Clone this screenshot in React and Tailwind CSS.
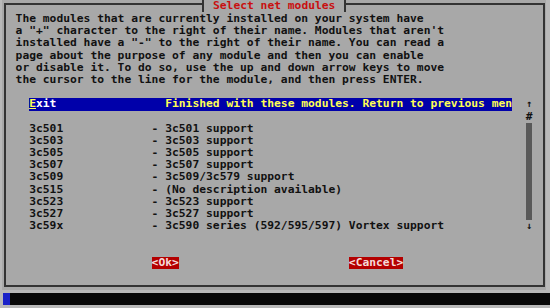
const INTRO = [
    'The modules that are currently installed on your system have',
    'a "+" character to the right of their name. Modules that aren\'t',
    'installed have a "-" to the right of their name. You can read a',
    'page about the purpose of any module and then you can enable',
    'or disable it. To do so, use the up and down arrow keys to move',
    'the cursor to the line for the module, and then press ENTER.',
];

const MODULES = [
    { name: '3c501', desc: '3c501 support' },
    { name: '3c503', desc: '3c503 support' },
    { name: '3c505', desc: '3c505 support' },
    { name: '3c507', desc: '3c507 support' },
    { name: '3c509', desc: '3c509/3c579 support' },
    { name: '3c515', desc: '(No description available)' },
    { name: '3c523', desc: '3c523 support' },
    { name: '3c527', desc: '3c527 support' },
    { name: '3c59x', desc: '3c590 series (592/595/597) Vortex support' },
];

const ROW = 'h-[12.2px] leading-[12.2px] whitespace-pre';

export default function App() {
    return (
        <div className="w-[550px] h-[308px] bg-[#b9b9b9] flex flex-col overflow-hidden font-['DejaVu_Sans_Mono','Liberation_Mono',monospace] text-[11.3px] font-bold text-[#111]">

            {/* ── Dialog area ─────────────────────────────────────────── */}
            <div className="h-[290px] bg-[#a8a8a8] ml-[2px] mr-[4px] pt-[3px] pl-[2px] pr-[1px]">
                <div className="relative h-[284px] border-2 border-[#333] pt-[8px] pl-[9.6px]">

                    {/* title */}
                    <div className="absolute top-[-5px] left-[196px] h-[12px] flex bg-[#a8a8a8]">
                        <span className="w-[2px] bg-[#333]" />
                        <span className="px-[9px] leading-[12px] text-[#c81010] whitespace-pre">Select net modules</span>
                        <span className="w-[2px] bg-[#333]" />
                    </div>

                    {INTRO.map((line) => (
                        <div key={line} className={ROW}>{line}</div>
                    ))}
                    <div className="h-[12.2px]" />

                    {/* list + scrollbar */}
                    <div className="flex ml-[2ch]">
                        <div className="w-[71ch]">
                            <div className={`${ROW} flex bg-[#0000aa]`}>
                                <span className="w-[20ch] text-white">
                                    <span className="text-[#ffff55] underline">E</span>xit
                                </span>
                                <span className="text-[#ffff55]">Finished with these modules. Return to previous men</span>
                            </div>
                            <div className="h-[12.2px]" />
                            {MODULES.map(({ name, desc }) => (
                                <div key={name} className={`${ROW} flex`}>
                                    <span className="w-[18ch]">{name}</span>
                                    <span>- {desc}</span>
                                </div>
                            ))}
                        </div>
                        <div className="ml-[2ch] w-[1ch] flex flex-col items-center">
                            <div className={`${ROW} text-[10px]`}>↑</div>
                            <div className={ROW}>#</div>
                            <div className="h-[97.6px] w-[6px] bg-[#595959]" />
                            <div className={`${ROW} text-[10px]`}>↓</div>
                        </div>
                    </div>

                    {/* buttons */}
                    <div className="flex ml-[20ch] mt-[24.4px]">
                        <span className={`${ROW} bg-[#b40000] text-[#f6dada]`}>&lt;Ok&gt;</span>
                        <span className={`${ROW} ml-[25ch] bg-[#b40000] text-[#f6dada]`}>&lt;Cancel&gt;</span>
                    </div>
                </div>
            </div>

            {/* ── Status line ─────────────────────────────────────────── */}
            <div className="mt-[3px] h-[12px] ml-[3px] bg-[#080808] flex">
                <span className="w-[7px] bg-[#1a22c8]" />
            </div>
        </div>
    );
}
